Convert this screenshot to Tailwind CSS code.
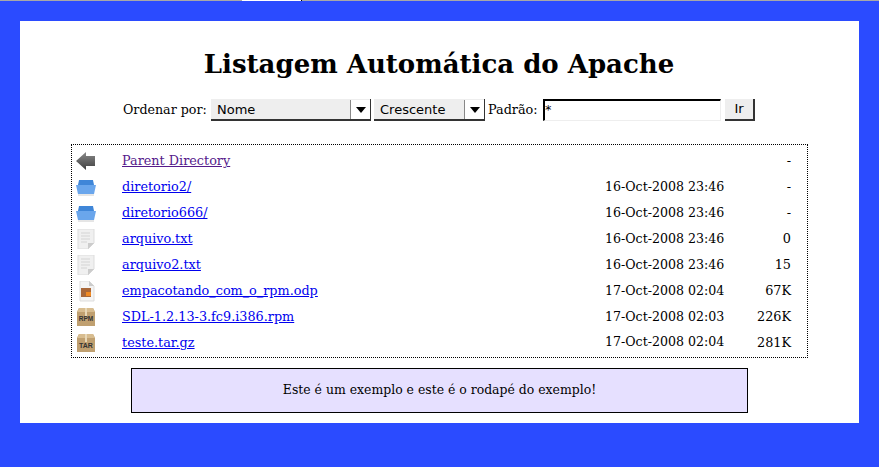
<!DOCTYPE html>
<html lang="en">
<head>
    <meta charset="UTF-8">
    <title>Listagem Automática do Apache</title>
    <script src="https://cdn.jsdelivr.net/npm/@tailwindcss/browser@4"></script>
</head>
<body class="bg-[#2b4bff] font-['DejaVu_Serif',serif] text-[12.8px] text-black h-[467px] overflow-hidden">
    <!-- Top strip -->
    <div class="flex h-px bg-[#a8a8a8]">
        <div class="w-[59px] ml-[242px] bg-white"></div>
        <div class="w-px bg-black"></div>
    </div>

    <!-- Page -->
    <main class="mx-5 mt-5 h-[402px] bg-white flex flex-col items-center">
        <h1 class="mt-[26px] mr-px h-[34px] leading-[34px] text-[26px] font-bold">Listagem Automática do Apache</h1>

        <!-- Sort form -->
        <form class="mt-[18px] mr-px w-[632px] h-[22px] flex items-center">
            <span class="w-[84px] mr-[4px] whitespace-nowrap text-[12.65px]">Ordenar por:</span>
            <div class="w-[160px] h-[22px] bg-[#eeeeee] border-b-2 border-r border-[#333] flex items-center text-[13px] pt-px font-['DejaVu_Sans',sans-serif] mr-[3px]">
                <span class="flex-1 pl-[6px]">Nome</span>
                <span class="w-[20px] h-[19px] border-l border-[#888] bg-white flex items-center justify-center">
                    <span class="border-x-[5px] border-t-[6px] border-x-transparent border-t-black"></span>
                </span>
            </div>
            <div class="w-[111px] h-[22px] bg-[#eeeeee] border-b-2 border-r border-[#333] flex items-center text-[13px] pt-px font-['DejaVu_Sans',sans-serif] mr-[3px]">
                <span class="flex-1 pl-[6px]">Crescente</span>
                <span class="w-[20px] h-[19px] border-l border-[#888] bg-white flex items-center justify-center">
                    <span class="border-x-[5px] border-t-[6px] border-x-transparent border-t-black"></span>
                </span>
            </div>
            <span class="w-[51px] mr-[4px] whitespace-nowrap">Padrão:</span>
            <div class="w-[178px] h-[22px] border-t-2 border-l-2 border-black border-r border-b border-r-[#eee] border-b-[#eee] flex items-center leading-none font-['DejaVu_Sans',sans-serif] mr-[4px]">*</div>
            <div class="w-[30px] h-[22px] bg-[#eeeeee] border-b-2 border-r-2 border-[#333] flex items-center justify-center text-[13px] font-['DejaVu_Sans',sans-serif]">Ir</div>
        </form>

        <!-- Listing -->
        <table class="mt-[23px] w-[737px] border border-dotted border-black border-separate border-spacing-0 table-fixed">
            <colgroup>
                <col class="w-[50px]">
                <col>
                <col class="w-[134px]">
                <col class="w-[68px]">
            </colgroup>
            <tbody>
                <tr class="h-[29px]">
                    <td class="pl-[3px] pt-[3px]"><svg class="blur-[0.4px]" width="22" height="20" viewBox="0 0 22 20"><defs><linearGradient id="arrow" x1="0" y1="0" x2="0" y2="1"><stop offset="0" stop-color="#8a8a8a"/><stop offset="1" stop-color="#3f3f3f"/></linearGradient></defs><path d="M1 10 L11 1 V5 H20 V15 H11 V19 Z" fill="url(#arrow)"/></svg></td>
                    <td class="pt-[3px]"><a href="#" class="underline text-[#551a8b]">Parent Directory</a></td>
                    <td></td>
                    <td class="text-right pr-[16px] pt-[3px]">-</td>
                </tr>
                <tr class="h-[26px]">
                    <td class="pl-[3px]"><svg class="blur-[0.4px]" width="22" height="20" viewBox="0 0 22 20"><path d="M4 3 H18 L19 8 H3 Z" fill="#3f86d8"/><path d="M1 8 H21 L19 17 H3 Z" fill="#6aa6ec"/><path d="M3 18 H19" stroke="#ccc"/></svg></td>
                    <td><a href="#" class="underline text-[#0000ee]">diretorio2/</a></td>
                    <td class="text-[12.6px]">16-Oct-2008 23:46</td>
                    <td class="text-right pr-[16px]">-</td>
                </tr>
                <tr class="h-[26px]">
                    <td class="pl-[3px]"><svg class="blur-[0.4px]" width="22" height="20" viewBox="0 0 22 20"><path d="M4 3 H18 L19 8 H3 Z" fill="#3f86d8"/><path d="M1 8 H21 L19 17 H3 Z" fill="#6aa6ec"/><path d="M3 18 H19" stroke="#ccc"/></svg></td>
                    <td><a href="#" class="underline text-[#0000ee]">diretorio666/</a></td>
                    <td class="text-[12.6px]">16-Oct-2008 23:46</td>
                    <td class="text-right pr-[16px]">-</td>
                </tr>
                <tr class="h-[26px]">
                    <td class="pl-[3px]"><svg class="blur-[0.4px]" width="22" height="20" viewBox="0 0 22 20"><path d="M3 0 H19 V14 L13 20 H3 Z" fill="#f0f0f0" stroke="#ddd"/><path d="M6 4 H15 M6 7 H15 M6 10 H15 M6 13 H12" stroke="#d4d4d4"/><path d="M13 20 V14 H19 Z" fill="#ccc"/></svg></td>
                    <td><a href="#" class="underline text-[#0000ee]">arquivo.txt</a></td>
                    <td class="text-[12.6px]">16-Oct-2008 23:46</td>
                    <td class="text-right pr-[16px]">0</td>
                </tr>
                <tr class="h-[26px]">
                    <td class="pl-[3px]"><svg class="blur-[0.4px]" width="22" height="20" viewBox="0 0 22 20"><path d="M3 0 H19 V14 L13 20 H3 Z" fill="#f0f0f0" stroke="#ddd"/><path d="M6 4 H15 M6 7 H15 M6 10 H15 M6 13 H12" stroke="#d4d4d4"/><path d="M13 20 V14 H19 Z" fill="#ccc"/></svg></td>
                    <td><a href="#" class="underline text-[#0000ee]">arquivo2.txt</a></td>
                    <td class="text-[12.6px]">16-Oct-2008 23:46</td>
                    <td class="text-right pr-[16px]">15</td>
                </tr>
                <tr class="h-[26px]">
                    <td class="pl-[3px]"><svg class="blur-[0.4px]" width="22" height="21" viewBox="0 0 22 21"><path d="M5 0 H14 L19 5 V20 H5 Z" fill="#f4f4f4" stroke="#ddd"/><path d="M14 0 V5 H19 Z" fill="#ccc"/><rect x="6" y="7" width="10" height="9" fill="#a9683a"/><rect x="11" y="11" width="5" height="4" fill="#f08a24"/></svg></td>
                    <td><a href="#" class="underline text-[#0000ee]">empacotando_com_o_rpm.odp</a></td>
                    <td class="text-[12.6px]">17-Oct-2008 02:04</td>
                    <td class="text-right pr-[16px]">67K</td>
                </tr>
                <tr class="h-[26px]">
                    <td class="pl-[3px]"><svg width="22" height="20" viewBox="0 0 22 20"><path d="M4 1 H18 L20 5 V19 H2 V5 Z" fill="#c0a070"/><path d="M4 1 H18 L20 5 H2 Z" fill="#d8bd90"/><rect x="10" y="1" width="2" height="8" fill="#e8d8b8"/><text x="11" y="14" text-anchor="middle" font-family="Liberation Sans, sans-serif" font-size="6.5" font-weight="bold" fill="#333">RPM</text></svg></td>
                    <td><a href="#" class="underline text-[#0000ee]">SDL-1.2.13-3.fc9.i386.rpm</a></td>
                    <td class="text-[12.6px]">17-Oct-2008 02:03</td>
                    <td class="text-right pr-[16px]">226K</td>
                </tr>
                <tr class="h-[27px]">
                    <td class="pl-[3px] pb-[2px]"><svg width="22" height="20" viewBox="0 0 22 20"><path d="M4 1 H18 L20 5 V19 H2 V5 Z" fill="#c0a070"/><path d="M4 1 H18 L20 5 H2 Z" fill="#d8bd90"/><rect x="10" y="1" width="2" height="8" fill="#e8d8b8"/><text x="11" y="15" text-anchor="middle" font-family="Liberation Sans, sans-serif" font-size="7" font-weight="bold" fill="#333">TAR</text></svg></td>
                    <td class="pb-[2px]"><a href="#" class="underline text-[#0000ee]">teste.tar.gz</a></td>
                    <td class="text-[12.6px] pb-[2px]">17-Oct-2008 02:04</td>
                    <td class="text-right pr-[16px] pb-[2px]">281K</td>
                </tr>
            </tbody>
        </table>

        <!-- Footer -->
        <footer class="mt-[10px] w-[617px] h-[45px] bg-[#e6e0ff] border border-black flex items-center justify-center text-[12.45px]">Este é um exemplo e este é o rodapé do exemplo!</footer>
    </main>
</body>
</html>
